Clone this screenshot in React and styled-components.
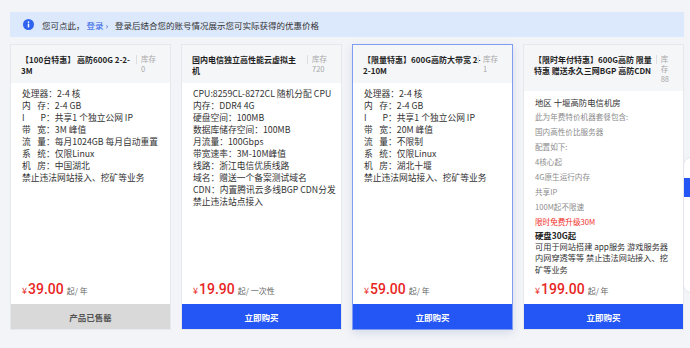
import React from 'react';
import styled, { createGlobalStyle } from 'styled-components';

const GlobalStyle = createGlobalStyle`
  * {
    box-sizing: border-box;
  }
  html,
  body {
    margin: 0;
    padding: 0;
    background: #f3f4f7;
  }
  body {
    font-family: 'Noto Sans CJK SC', 'Noto Sans', sans-serif;
    color: #333;
  }
`;

const plans = [
  {
    title: ['【100台特惠】 高防600G 2-2-', '3M'],
    stock: ['库存', '0'],
    specs: [
      ['处理器', '2-4 核'],
      ['内存', '2-4 GB'],
      ['IP', '共享1 个独立公网 IP'],
      ['带宽', '3M 峰值'],
      ['流量', '每月1024GB 每月自动重置'],
      ['系统', '仅限Linux'],
      ['机房', '中国湖北'],
    ],
    tail: '禁止违法网站接入、挖矿等业务',
    price: '39.00',
    unit: '起/ 年',
    soldOut: true,
  },
  {
    title: ['国内电信独立高性能云虚拟主', '机'],
    stock: ['库存', '720'],
    lines: [
      'CPU:8259CL-8272CL 随机分配 CPU',
      '内存：DDR4 4G',
      '硬盘空间：100MB',
      '数据库储存空间：100MB',
      '月流量：100Gbps',
      '带宽速率：3M-10M峰值',
      '线路：浙江电信优质线路',
      '域名：赠送一个备案测试域名',
      'CDN：内置腾讯云多线BGP CDN分发',
      '禁止违法站点接入',
    ],
    price: '19.90',
    unit: '起/ 一次性',
  },
  {
    title: ['【限量特惠】600G高防大带宽 2-', '2-10M'],
    stock: ['库存', '1'],
    specs: [
      ['处理器', '2-4 核'],
      ['内存', '2-4 GB'],
      ['IP', '共享1 个独立公网 IP'],
      ['带宽', '20M 峰值'],
      ['流量', '不限制'],
      ['系统', '仅限Linux'],
      ['机房', '湖北十堰'],
    ],
    tail: '禁止违法网站接入、挖矿等业务',
    price: '59.00',
    unit: '起/ 年',
    active: true,
  },
  {
    title: ['【限时年付特惠】600G高防 限量', '特惠 赠送永久三网BGP 高防CDN'],
    stock: ['库', '存', '88'],
    region: '地区 十堰高防电信机房',
    notes: [
      '此为年费特价机器套餐包含:',
      '国内高性价比服务器',
      '配置如下:',
      '4核心起',
      '4G原生运行内存',
      '共享IP',
      '100M起不限速',
    ],
    hot: '限时免费升级30M',
    disk: '硬盘30G起',
    para: ['可用于网站搭建 app服务 游戏服务器', '内网穿透等等 禁止违法网站接入、挖', '矿等业务'],
    price: '199.00',
    unit: '起/ 年',
  },
];

const App = () => {
  return (
    <Page>
      <GlobalStyle />
      <Notice>
        <svg width="11" height="11" viewBox="0 0 12 12">
          <circle cx="6" cy="6" r="6" fill="#2f63f0" />
          <rect x="5.2" y="5" width="1.6" height="4.2" rx="0.5" fill="#fff" />
          <circle cx="6" cy="3.3" r="0.95" fill="#fff" />
        </svg>
        <NoticeText>您可点此，</NoticeText>
        <LoginLink href="#">登录 ›</LoginLink>
        <span>登录后结合您的账号情况展示您可实际获得的优惠价格</span>
      </Notice>

      <CardGrid>
        {plans.map((plan, i) => (
          <Card key={i} $active={plan.active}>
            <CardHead>
              <Title>
                {plan.title.map((t) => (
                  <span key={t}>{t}</span>
                ))}
              </Title>
              <Stock>
                {plan.stock.map((s) => (
                  <span key={s}>{s}</span>
                ))}
              </Stock>
            </CardHead>

            <Body>
              {plan.specs &&
                plan.specs.map(([label, value]) => (
                  <Line key={label}>
                    {label.length === 2 ? <Label>{label.split('').map((c) => <i key={c}>{c}</i>)}</Label> : label}
                    ：{value}
                  </Line>
                ))}
              {plan.tail && <Line>{plan.tail}</Line>}

              {plan.lines && plan.lines.map((l) => <Line key={l}>{l}</Line>)}

              {plan.region && (
                <>
                  <Line $small>{plan.region}</Line>
                  {plan.notes.map((n) => (
                    <Note key={n}>{n}</Note>
                  ))}
                  <Note $hot>{plan.hot}</Note>
                  <Line $strong $small>
                    {plan.disk}
                  </Line>
                  <Para>
                    {plan.para.map((p) => (
                      <span key={p}>{p}</span>
                    ))}
                  </Para>
                </>
              )}
            </Body>

            <PriceRow>
              <Currency>¥</Currency>
              <Amount>{plan.price}</Amount>
              <Unit>{plan.unit}</Unit>
            </PriceRow>
            <BuyButton $soldOut={plan.soldOut}>{plan.soldOut ? '产品已售罄' : '立即购买'}</BuyButton>
          </Card>
        ))}
      </CardGrid>

      <FloatBar>
        <FloatTab />
      </FloatBar>
    </Page>
  );
};

export default App;

const Page = styled.div`
  height: 348px;
  padding: 12px 6px 0 10px;
  overflow: hidden;
`;

const Notice = styled.div`
  display: flex;
  align-items: center;
  height: 25px;
  padding: 0 13px;
  background: #dce8fc;
  font-size: 8.5px;
  color: #333;
  white-space: nowrap;

  svg {
    flex: none;
    margin-right: 8px;
  }
`;

const NoticeText = styled.span`
  color: #333;
`;

const LoginLink = styled.a`
  margin: 0 7px 0 2px;
  color: #2b5ee6;
  text-decoration: none;
`;

const CardGrid = styled.div`
  display: grid;
  grid-template-columns: repeat(4, minmax(0, 1fr));
  gap: 10px;
  margin-top: 7px;
`;

const Card = styled.div`
  display: flex;
  flex-direction: column;
  min-width: 0;
  height: 286px;
  background: #fff;
  border: 1px solid ${(p) => (p.$active ? '#7f9df1' : '#e6e8ed')};
  box-shadow: ${(p) => (p.$active ? '0 3px 8px rgba(40, 70, 160, 0.14)' : 'none')};
`;

const CardHead = styled.div`
  display: flex;
  align-items: flex-start;
  gap: 4px;
  padding: 9px 14px 7px 10px;
  background: #f5f6f8;
`;

const Title = styled.div`
  flex: 1;
  min-width: 0;
  font-size: 8px;
  font-weight: 700;
  line-height: 11px;
  color: #1f1f1f;

  span {
    display: block;
    white-space: nowrap;
  }
`;

const Stock = styled.div`
  position: relative;
  flex: none;
  padding-left: 5px;
  font-size: 7.5px;
  line-height: 10px;
  color: #a8a8a8;

  span {
    display: block;
    white-space: nowrap;
  }

  &::before {
    content: '';
    position: absolute;
    left: 0;
    top: 1px;
    width: 1px;
    height: 9px;
    background: #dcdee2;
  }
`;

const Body = styled.div`
  flex: 1;
  min-width: 0;
  padding: 5px 11px 0;
  font-size: 8.75px;
  line-height: 12px;
  color: #333;
`;

const Line = styled.div`
  white-space: nowrap;
  font-size: ${(p) => (p.$small ? '8.4px' : 'inherit')};
  font-weight: ${(p) => (p.$strong ? 700 : 400)};
  color: ${(p) => (p.$strong ? '#222' : '#333')};
`;

const Label = styled.span`
  display: inline-flex;
  justify-content: space-between;
  width: 2.75em;

  i {
    font-style: normal;
  }
`;

const Note = styled.div`
  margin-top: 1.8px;
  font-size: 7.6px;
  line-height: 13.3px;
  white-space: nowrap;
  color: ${(p) => (p.$hot ? '#f02d27' : '#8c8c8c')};
`;

const Para = styled.div`
  font-size: 8.2px;
  line-height: 11.5px;
  color: #333;

  span {
    display: block;
    white-space: nowrap;
  }
`;

const PriceRow = styled.div`
  display: flex;
  align-items: baseline;
  height: 27px;
  padding: 2px 11px 5px;
  line-height: 20px;
  color: #e8251f;
`;

const Currency = styled.span`
  font-size: 9px;
  margin-right: 1px;
`;

const Amount = styled.span`
  font-family: Roboto, 'Noto Sans', sans-serif;
  font-size: 14px;
  font-weight: 500;
`;

const Unit = styled.span`
  margin-left: 3px;
  font-size: 8px;
  color: #666;
`;

const BuyButton = styled.button`
  flex: none;
  width: 100%;
  height: 25px;
  padding: 0;
  border: 0;
  font-family: inherit;
  font-size: 8.5px;
  font-weight: 700;
  color: ${(p) => (p.$soldOut ? '#555' : '#fff')};
  background: ${(p) => (p.$soldOut ? '#d9d9d9' : '#2356f4')};
`;

const FloatBar = styled.div`
  position: fixed;
  left: 683px;
  top: 157px;
  width: 40px;
  height: 136px;
  background: #fff;
  border: 1px solid #e3e5ea;
  border-radius: 8px 0 0 8px;
  overflow: hidden;
`;

const FloatTab = styled.div`
  margin-top: 20px;
  height: 19px;
  background: #2356f4;
`;
